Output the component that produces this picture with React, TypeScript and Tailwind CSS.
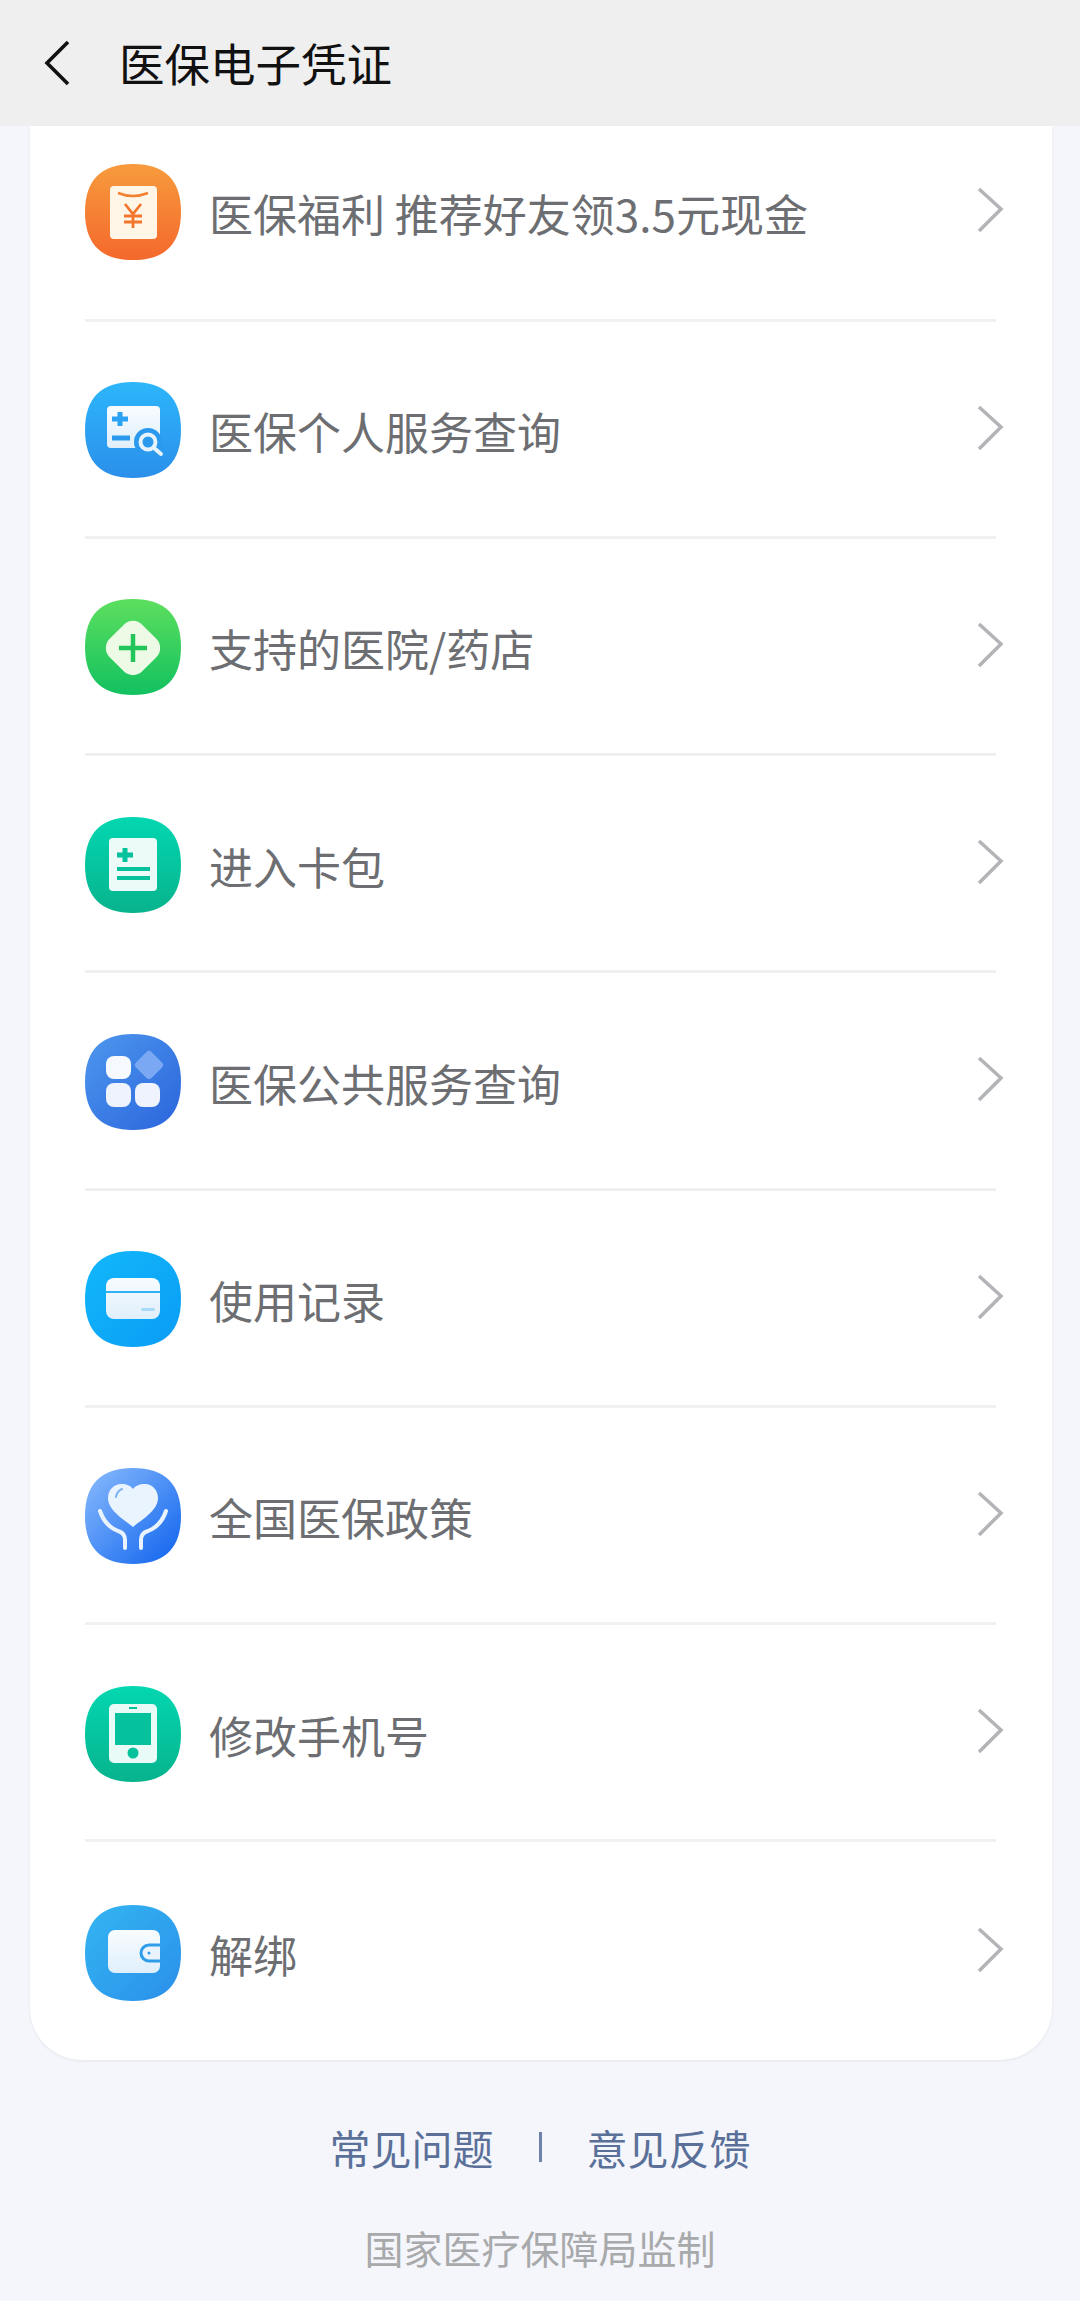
import React from "react";

const Sq = ({ id, from, to, diag, children }: { id: string; from: string; to: string; diag?: boolean; children: React.ReactNode }) => (
  <svg width="96" height="96" viewBox="0 0 96 96" className="shrink-0">
    <defs>
      <linearGradient id={id} x1={diag ? "0" : "0.5"} y1="0" x2={diag ? "1" : "0.5"} y2="1">
        <stop offset="0" stopColor={from} />
        <stop offset="1" stopColor={to} />
      </linearGradient>
      <linearGradient id={id + "w"} x1="0.5" y1="0" x2="0.5" y2="1">
        <stop offset="0" stopColor="#f8fcff" />
        <stop offset="1" stopColor="#dfeffb" />
      </linearGradient>
    </defs>
    <path d="M48 0C80 0 96 16 96 48C96 80 80 96 48 96C16 96 0 80 0 48C0 16 16 0 48 0Z" fill={`url(#${id})`} />
    {children}
  </svg>
);

const icons = [
  <Sq id="a" from="#f79b3d" to="#f4682c">
    <rect x="25" y="22" width="47" height="53" rx="4" fill="#fff6e8" />
    <path d="M33 29Q48 35 63 29" stroke="#f4812f" strokeWidth="2.5" fill="none" />
    <path d="M40 40L48 50L56 40M48 50V64M39 52H57M39 58H57" stroke="#f4762e" strokeWidth="2.8" fill="none" />
  </Sq>,
  <Sq id="b" from="#2db6fb" to="#2b8fea">
    <rect x="22" y="24" width="53" height="42" rx="4" fill="url(#bw)" />
    <path d="M27 37H43M35 30V44" stroke="#2ba2f2" strokeWidth="5" />
    <path d="M27 56H45" stroke="#2b9aee" strokeWidth="5" />
    <circle cx="63" cy="60" r="14" fill="#2b9aee" />
    <circle cx="63" cy="60" r="7.5" fill="none" stroke="#e6f3fc" strokeWidth="4" />
    <path d="M69 66L76 72" stroke="#e6f3fc" strokeWidth="4" strokeLinecap="round" />
  </Sq>,
  <Sq id="c" from="#5ddf5e" to="#12c160">
    <rect x="25" y="26" width="46" height="46" rx="13" fill="#ecfae6" transform="rotate(45 48 49)" />
    <path d="M34 49H62M48 35V63" stroke="#22c55a" strokeWidth="4.5" />
  </Sq>,
  <Sq id="d" from="#03d7b1" to="#07b38d">
    <rect x="24" y="21" width="48" height="53" rx="4" fill="#ecfbf8" />
    <path d="M32 38H48M40 31V45" stroke="#05c29c" strokeWidth="5" />
    <path d="M32 52H65M32 61H65" stroke="#05c29c" strokeWidth="4" />
  </Sq>,
  <Sq id="e" from="#4e98ee" to="#2a64dc" diag>
    <rect x="21" y="22" width="25" height="23" rx="8" fill="#f6f9fe" />
    <rect x="21" y="49" width="25" height="24" rx="8" fill="#eef3fd" />
    <rect x="50" y="49" width="25" height="24" rx="8" fill="#eef3fd" />
    <rect x="53" y="20" width="22" height="22" rx="4" fill="#7ba8f2" transform="rotate(45 64 31)" />
  </Sq>,
  <Sq id="f" from="#12b8fb" to="#0a9cf5" diag>
    <rect x="21" y="27" width="54" height="41" rx="8" fill="url(#fw)" />
    <rect x="21" y="40" width="54" height="2" fill="#2fb2f6" />
    <rect x="56" y="57" width="14" height="3" rx="1.5" fill="#a9d9f6" />
  </Sq>,
  <Sq id="g" from="#8bbcfd" to="#0d62ee" diag>
    <path d="M48 59C40 52 23 43 23 30C23 21 30 16 36 16C42 16 46 18 48 21C50 18 54 16 60 16C67 16 73 22 73 30C73 43 56 52 48 59Z" fill="#e9f4fe" />
    <path d="M31 29Q32 23 37 21" stroke="#7db2f6" strokeWidth="2" fill="none" strokeLinecap="round" />
    <path d="M15 43Q20 58 33 63Q40 65 40 72V80M81 43Q76 58 63 63Q56 65 56 72V80" stroke="#e9f4fe" strokeWidth="4" fill="none" strokeLinecap="round" strokeLinejoin="round" />
  </Sq>,
  <Sq id="h" from="#03d7b1" to="#07b38d">
    <rect x="24" y="18" width="48" height="59" rx="5" fill="#e9fbf7" />
    <rect x="30" y="27" width="36" height="32" fill="#05c29c" />
    <circle cx="48" cy="67" r="5.5" fill="#05c29c" />
    <path d="M44 22H52" stroke="#05c29c" strokeWidth="2" />
  </Sq>,
  <Sq id="i" from="#33b6f2" to="#2b8fea" diag>
    <rect x="23" y="25" width="52" height="43" rx="7" fill="url(#iw)" />
    <path d="M75 40H64A8 8 0 0 0 64 56H75" fill="#e8f3fc" stroke="#2f9dec" strokeWidth="3" />
    <circle cx="64" cy="48" r="1.5" fill="#2f9dec" />
  </Sq>,
];

const labels = [
  "医保福利 推荐好友领3.5元现金",
  "医保个人服务查询",
  "支持的医院/药店",
  "进入卡包",
  "医保公共服务查询",
  "使用记录",
  "全国医保政策",
  "修改手机号",
  "解绑",
];

const Chevron = () => (
  <svg width="28" height="46" viewBox="0 0 28 46" className="mt-[-5px] shrink-0">
    <path d="M3 2L25 22L3 44" stroke="#b2b4b8" strokeWidth="3.5" fill="none" />
  </svg>
);

export default function App() {
  return (
    <div
      className="flex h-[2301px] w-[1080px] flex-col overflow-hidden bg-[#f4f6fb]"
      style={{ fontFamily: '"Noto Sans CJK SC", "Noto Sans", sans-serif' }}
    >
      <header className="flex h-[126px] shrink-0 items-center bg-[#efefef] pl-[44px]">
        <svg width="26" height="46" viewBox="0 0 26 46">
          <path d="M24 2L3 23L24 44" stroke="#111" strokeWidth="3.6" fill="none" />
        </svg>
        <h1 className="mb-[2px] ml-[49px] text-[45.5px] leading-[56px] font-normal text-[#111]">医保电子凭证</h1>
      </header>
      <div className="ml-[30px] h-[1934px] w-[1022px] shrink-0 rounded-b-[52px] bg-white shadow-[0_1px_3px_rgba(0,0,0,0.07)]">
        {labels.map((label, i) => (
          <div
            key={label}
            className={
              i === 0
                ? "flex h-[195.5px] flex-col pt-[38px] pr-[48px] pl-[55px]"
                : i === 8
                  ? "flex h-[218.5px] flex-col pt-[62.5px] pr-[48px] pl-[55px]"
                  : "flex h-[217.25px] flex-col pt-[60.5px] pr-[48px] pl-[55px]"
            }
          >
            <div className="flex h-[96px] items-center">
              {icons[i]}
              <span className="ml-[28px] flex-1 pt-[2px] text-[44px] leading-[56px] text-[#6c6e72]">{label}</span>
              <Chevron />
            </div>
            {i < 8 && <div className="mt-auto mr-[8px] h-[3px] bg-[#f0f0f0]" />}
          </div>
        ))}
      </div>
      <div className="mt-[59px] flex h-[56px] items-center justify-center text-[41px] leading-[56px] text-[#5a7099]">
        <span>常见问题</span>
        <span className="mx-[45px] h-[30px] w-[3px] bg-[#6f83a8]" />
        <span>意见反馈</span>
      </div>
      <div className="mt-[44px] text-center text-[39px] leading-[56px] text-[#a8a9ab]">国家医疗保障局监制</div>
    </div>
  );
}
